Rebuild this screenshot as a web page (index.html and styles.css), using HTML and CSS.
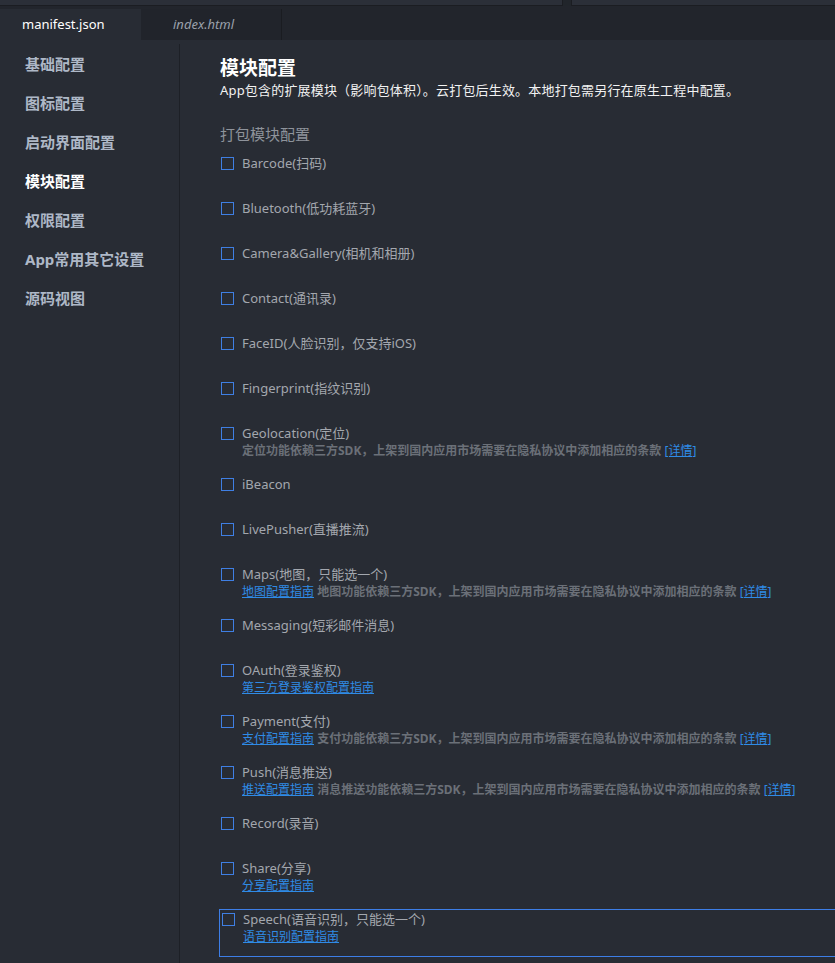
FILE: index.html
```html
<!DOCTYPE html>
<html lang="zh">
<head>
<meta charset="utf-8">
<title>manifest.json</title>
<link rel="stylesheet" href="styles.css">
</head>
<body>
<div class="topstrip">
  <div class="strip-box strip-left"></div>
  <div class="strip-gap"></div>
  <div class="strip-box strip-right"></div>
</div>
<div class="tabbar">
  <div class="tab active">manifest.json</div>
  <div class="tab inactive">index.html</div>
</div>
<div class="editor">
  <nav class="sidebar">
    <div class="nav-item">基础配置</div>
    <div class="nav-item">图标配置</div>
    <div class="nav-item">启动界面配置</div>
    <div class="nav-item current">模块配置</div>
    <div class="nav-item">权限配置</div>
    <div class="nav-item">App常用其它设置</div>
    <div class="nav-item">源码视图</div>
  </nav>
  <main class="content">
    <h1 class="title">模块配置</h1>
    <p class="subtitle">App包含的扩展模块（影响包体积）。云打包后生效。本地打包需另行在原生工程中配置。</p>
    <h2 class="section">打包模块配置</h2>
    <div class="list">
      <div class="item"><div class="row"><span class="box"></span><span class="label">Barcode(扫码)</span></div></div>
      <div class="item"><div class="row"><span class="box"></span><span class="label">Bluetooth(低功耗蓝牙)</span></div></div>
      <div class="item"><div class="row"><span class="box"></span><span class="label">Camera&amp;Gallery(相机和相册)</span></div></div>
      <div class="item"><div class="row"><span class="box"></span><span class="label">Contact(通讯录)</span></div></div>
      <div class="item"><div class="row"><span class="box"></span><span class="label">FaceID(人脸识别，仅支持iOS)</span></div></div>
      <div class="item"><div class="row"><span class="box"></span><span class="label">Fingerprint(指纹识别)</span></div></div>
      <div class="item"><div class="row"><span class="box"></span><span class="label">Geolocation(定位)</span></div>
        <div class="sub">定位功能依赖三方SDK，上架到国内应用市场需要在隐私协议中添加相应的条款 <a class="link">[详情]</a></div></div>
      <div class="item"><div class="row"><span class="box"></span><span class="label">iBeacon</span></div></div>
      <div class="item"><div class="row"><span class="box"></span><span class="label">LivePusher(直播推流)</span></div></div>
      <div class="item"><div class="row"><span class="box"></span><span class="label">Maps(地图，只能选一个)</span></div>
        <div class="sub"><a class="link">地图配置指南</a> 地图功能依赖三方SDK，上架到国内应用市场需要在隐私协议中添加相应的条款 <a class="link">[详情]</a></div></div>
      <div class="item"><div class="row"><span class="box"></span><span class="label">Messaging(短彩邮件消息)</span></div></div>
      <div class="item"><div class="row"><span class="box"></span><span class="label">OAuth(登录鉴权)</span></div>
        <div class="sub"><a class="link">第三方登录鉴权配置指南</a></div></div>
      <div class="item"><div class="row"><span class="box"></span><span class="label">Payment(支付)</span></div>
        <div class="sub"><a class="link">支付配置指南</a> 支付功能依赖三方SDK，上架到国内应用市场需要在隐私协议中添加相应的条款 <a class="link">[详情]</a></div></div>
      <div class="item"><div class="row"><span class="box"></span><span class="label">Push(消息推送)</span></div>
        <div class="sub"><a class="link">推送配置指南</a> 消息推送功能依赖三方SDK，上架到国内应用市场需要在隐私协议中添加相应的条款 <a class="link">[详情]</a></div></div>
      <div class="item"><div class="row"><span class="box"></span><span class="label">Record(录音)</span></div></div>
      <div class="item"><div class="row"><span class="box"></span><span class="label">Share(分享)</span></div>
        <div class="sub"><a class="link">分享配置指南</a></div></div>
      <div class="item focus"><div class="row"><span class="box"></span><span class="label">Speech(语音识别，只能选一个)</span></div>
        <div class="sub"><a class="link">语音识别配置指南</a></div></div>
    </div>
  </main>
</div>
</body>
</html>
```

FILE: styles.css
```css
* { box-sizing: border-box; }
html, body {
  margin: 0;
  padding: 0;
  width: 835px;
  height: 963px;
  overflow: hidden;
  background: #282c34;
  font-family: "Noto Sans", "Noto Sans CJK SC", sans-serif;
}

.topstrip {
  display: flex;
  height: 6px;
  background: #21252b;
}
.strip-box {
  background: #2b2f38;
  border-bottom: 1px solid #1b1d22;
  border-right: 1px solid #1b1d22;
}
.strip-left { width: 563px; }
.strip-gap { width: 8px; }
.strip-right { flex: 1; border-left: 1px solid #1b1d22; border-right: none; }

.tabbar {
  display: flex;
  height: 34px;
  padding-top: 3px;
  background: #22252c;
}
.tab {
  width: 141px;
  font-size: 13px;
  line-height: 31px;
}
.tab.active {
  background: #282c34;
  color: #ffffff;
  padding-left: 22px;
}
.tab.inactive {
  background: #21242b;
  color: #9ba1ab;
  font-style: italic;
  padding-left: 32px;
  border-right: 1px solid #1a1c21;
}

.editor {
  display: flex;
  height: 923px;
}
.sidebar {
  width: 180px;
  flex: none;
  border-right: 1px solid #1d2026;
  padding-top: 1px;
  margin-top: 4px;
}
.nav-item {
  height: 39px;
  line-height: 39px;
  padding-left: 25px;
  font-size: 15px;
  font-weight: 700;
  color: #aeb8c7;
}
.nav-item.current { color: #ffffff; }

.content {
  flex: 1;
  padding: 16px 0 0 40px;
  overflow: hidden;
}
.title {
  margin: 0;
  font-size: 19px;
  line-height: 24px;
  font-weight: 700;
  color: #ffffff;
}
.subtitle {
  margin: 0;
  font-size: 13px;
  line-height: 20px;
  letter-spacing: 0.18px;
  color: #f2f2f2;
}
.section {
  margin: 24px 0 10px;
  font-size: 15px;
  line-height: 20px;
  font-weight: 400;
  color: #8e939b;
}

.list {
  display: flex;
  flex-direction: column;
}
.item {
  min-height: 30px;
  margin-bottom: 15px;
  padding-left: 1px;
}
.row {
  display: flex;
  align-items: flex-start;
  height: 18px;
}
.box {
  width: 13px;
  height: 13px;
  margin-top: 3px;
  border: 1px solid #3f7fe3;
  flex: none;
  margin-right: 8px;
}
.label {
  font-size: 13px;
  line-height: 18px;
  color: #a3a7ae;
}
.sub {
  padding-left: 21px;
  font-size: 12px;
  line-height: 18px;
  font-weight: 700;
  color: #6b7078;
  white-space: nowrap;
}
.link {
  color: #2f8be6;
  text-decoration: underline;
  font-weight: 400;
}
.item.focus {
  border: 1px solid #3d7ee6;
  margin: -1px -4px 0 -1px;
  padding: 0 0 10px 2px;
}
```
